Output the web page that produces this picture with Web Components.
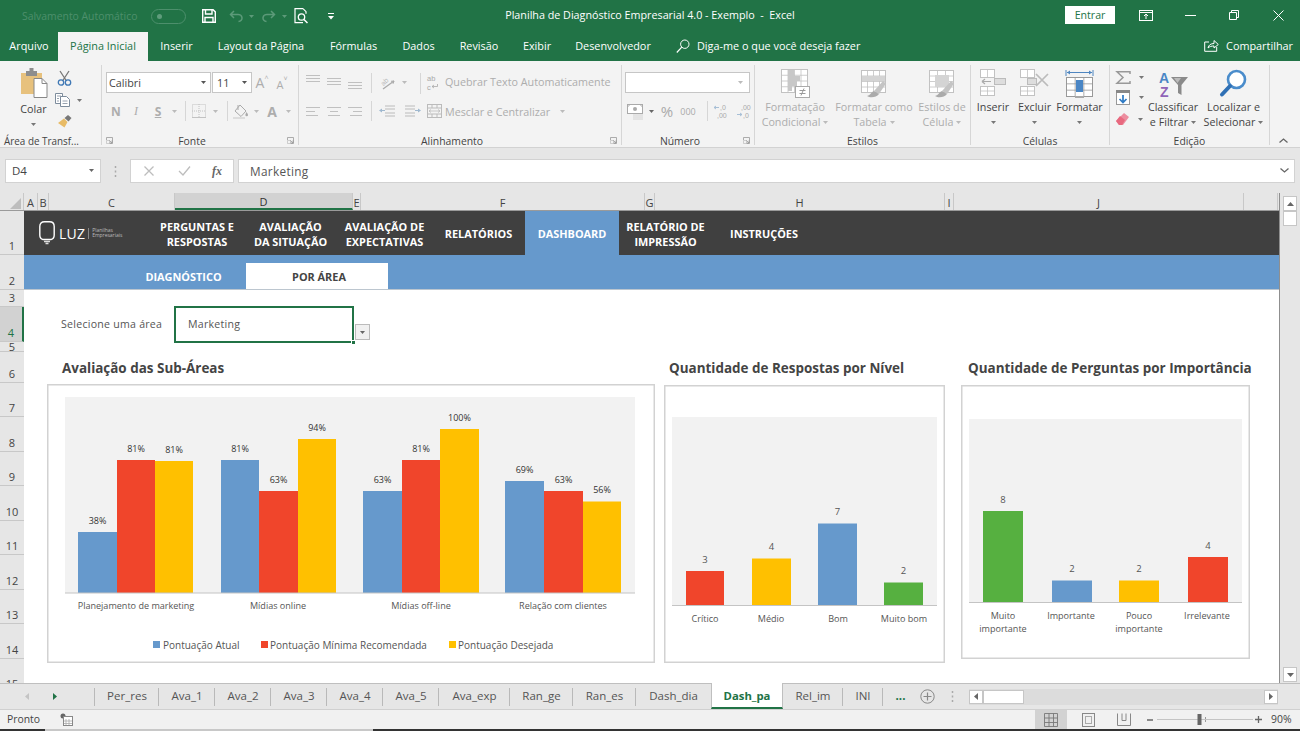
<!DOCTYPE html>
<html lang="pt-BR"><head><meta charset="utf-8"><title>Excel</title>
<style>
html,body{margin:0;padding:0;width:1300px;height:731px;overflow:hidden;background:#f3f3f3;font-family:"Open Sans","Liberation Sans",sans-serif}
#app{display:flex;flex-direction:column;width:1300px;height:731px}
</style></head><body>
<div id="app">
<x-titlebar></x-titlebar>
<x-tabstrip></x-tabstrip>
<x-ribbon></x-ribbon>
<x-formula></x-formula>
<x-grid></x-grid>
<x-sheettabs></x-sheettabs>
<x-status></x-status>
<x-strip></x-strip>
</div>
<script>
const svg=(w,h,b,st='')=>`<svg width="${w}" height="${h}" viewBox="0 0 ${w} ${h}" style="display:block;flex:none;overflow:visible;${st}">${b}</svg>`;
class B extends HTMLElement{
  connectedCallback(){ if(this.shadowRoot) return; this.attachShadow({mode:'open'}).innerHTML=`<style>${this.css()}</style>${this.html()}`; }
  css(){return ''} html(){return ''}
}
/* ---------- title bar ---------- */
customElements.define('x-titlebar',class extends B{
 css(){return `:host{display:grid;grid-template-columns:1fr auto 1fr;height:32px;background:#217346;color:#fff;flex:none;align-items:center;font-size:10.400px}
 .l,.r{display:flex;align-items:center}
 .l{padding-left:22px}.r{justify-content:flex-end}
 .auto{color:#4d8f6c;width:129px;font-size:10.400px;white-space:nowrap}
 .tog{width:35px;height:15px;border:1px solid #4d8f6c;border-radius:8px;box-sizing:border-box;display:flex;align-items:center;padding-left:5px}
 .tog i{width:5px;height:5px;border-radius:50%;background:#5f9c7c}
 .t{font-size:10.750px;white-space:pre;margin-top:-2px}
 .en{width:50px;height:18px;background:#fff;color:#217346;display:flex;align-items:center;justify-content:center;font-size:10.600px;margin-right:9px;margin-top:-2px}
 .c{display:flex;align-items:center;justify-content:center;width:44px;height:32px;flex:none;margin-top:-2px}`}
 html(){return `<div class="l"><span class="auto">Salvamento Automático</span><span class="tog"><i></i></span>
 ${svg(14,14,'<path d="M.7.7h10.400l2.200 2.200v10.400H.7z" fill="none" stroke="#fff" stroke-width="1.400"/><path d="M3.500 1v4h6.500V1M3 13V8.500h8V13" fill="none" stroke="#fff" stroke-width="1.400"/>','margin-left:16px')}
 ${svg(14,12,'<path d="M5 1 1.500 4.500 5 8M2 4.500h6.500a4 3.500 0 0 1 1 7" fill="none" stroke="#5c9a79" stroke-width="1.500"/>','margin-left:13px')}
 ${svg(5,3,'<path d="M0 0h5L2.500 3z" fill="#5c9a79"/>','margin-left:6px')}
 ${svg(14,12,'<path d="M9 1l3.500 3.500L9 8M12 4.500H5.500a4 3.500 0 0 0-1 7" fill="none" stroke="#5c9a79" stroke-width="1.500"/>','margin-left:8px')}
 ${svg(5,3,'<path d="M0 0h5L2.500 3z" fill="#5c9a79"/>','margin-left:6px')}
 ${svg(15,16,'<path d="M9 .7H1v14h8M9 .7l3 3v2" fill="none" stroke="#fff" stroke-width="1.200"/><circle cx="7.500" cy="9" r="3.200" fill="none" stroke="#fff" stroke-width="1.300"/><path d="M10 11.500l3.500 3.500" stroke="#fff" stroke-width="1.500"/>','margin-left:7px')}
 ${svg(6,7,'<path d="M0 .5h6" stroke="#fff"/><path d="M0 3h6L3 6.500z" fill="#fff"/>','margin-left:19px')}
 </div>
 <div class="t">Planilha de Diagnóstico Empresarial 4.0 - Exemplo  -  Excel</div>
 <div class="r"><span class="en">Entrar</span>
 <span class="c">${svg(14,11,'<rect x=".5" y=".5" width="13" height="10" fill="none" stroke="#fff"/><path d="M.5 2.500h13" stroke="#fff" stroke-width="1"/><path d="M7 9V4M5 6l2-2 2 2" fill="none" stroke="#fff"/>')}</span>
 <span class="c">${svg(11,1,'<path d="M0 .5h11" stroke="#fff"/>')}</span>
 <span class="c">${svg(10,10,'<path d="M.5 2.500h7v7h-7zM2.500 2.500v-2h7v7h-2" fill="none" stroke="#fff"/>')}</span>
 <span class="c">${svg(11,11,'<path d="M.5.5l10 10M10.500.5l-10 10" stroke="#fff"/>')}</span></div>`}
});
/* ---------- ribbon tabs ---------- */
customElements.define('x-tabstrip',class extends B{
 css(){return `:host{display:flex;height:29px;background:#217346;color:#fff;font-size:10.850px;flex:none}
 span{display:flex;align-items:center;justify-content:center;flex:none;white-space:nowrap;height:27px;padding-bottom:2px}
 .on{background:#f3f3f3;color:#217346}.sp{flex:1}`}
 html(){const t=[['Arquivo',58],['Página Inicial',90,1],['Inserir',57],['Layout da Página',112],['Fórmulas',73],['Dados',57],['Revisão',64],['Exibir',52],['Desenvolvedor',100]];
 return t.map(a=>`<span style="width:${a[1]}px" class="${a[2]?'on':''}">${a[0]}</span>`).join('')+
 `<span style="margin-left:13px;width:14px">${svg(14,14,'<circle cx="8.800" cy="5.200" r="4.200" fill="none" stroke="#fff"/><path d="M5.800 8.200.8 13.500" stroke="#fff" stroke-width="1.200"/>')}</span>
 <span style="margin-left:7px">Diga-me o que você deseja fazer</span><span class="sp"></span>
 <span>${svg(15,13,'<path d="M5 3H.7v9.300h12V8" fill="none" stroke="#fff"/><path d="M4 9c.5-3 3-4.500 6-4.500V1.500l4.300 4-4.300 3.500V7c-2.500 0-4.500.5-6 2z" fill="none" stroke="#fff"/>')}</span>
 <span style="margin-left:7px;margin-right:7px">Compartilhar</span>`}
});
/* ---------- ribbon ---------- */
customElements.define('rb-group',class extends B{
 css(){const w=this.getAttribute('w');return `:host{display:flex;flex-direction:column;flex:none;width:${w}px;height:80px;margin-top:4px;padding-top:7px;box-sizing:border-box;border-right:1px solid #d6d6d6}
 .b{flex:1;min-height:0}.f{height:15px;margin-bottom:-3px;display:grid;grid-template-columns:1fr auto 1fr;align-items:center;font-size:10.400px;color:#444;white-space:nowrap}
 .f.lnch{padding-right:16px}
 .k{justify-self:end;margin-right:-12px}`}
 html(){const L=this.getAttribute('launch')!==null;const s=this.getAttribute('label');const st=this.getAttribute('lstyle')||'';
 return `<div class="b"><slot></slot></div><div class="f ${L?'lnch':''}" style="${st}"><span></span><span>${s}</span>${L?`<span class="k">${svg(7,7,'<path d="M.5 3V.5h6v6H3.500M3 3l3 3M3.500 6H6V3.500" fill="none" stroke="#999" stroke-width=".8"/><path d="M.5 3.500h3v3h-3z" fill="none" stroke="#bbb" stroke-width=".7"/>')}</span>`:'<span></span>'}</div>`}
});
const dd=(c='#777')=>svg(5,3,`<path d="M0 0h5L2.500 3z" fill="${c}"/>`);
const g='#c2c2c2';
const grid=(x,y,w,h,cols,rows,c=g)=>{let s=`<rect x="${x+.5}" y="${y+.5}" width="${w}" height="${h}" fill="#fff" stroke="${c}"/>`;for(let i=1;i<cols;i++){const X=x+.5+i*w/cols;s+=`<path d="M${X} ${y}v${h+1}" stroke="${c}" stroke-width=".8"/>`}for(let i=1;i<rows;i++){const Y=y+.5+i*h/rows;s+=`<path d="M${x} ${Y}h${w+1}" stroke="${c}" stroke-width=".8"/>`}return s};
const brush=`<path d="M14 22l9-10 3 2.500-7 10.500z" fill="#c4c4c4"/><path d="M14 22c-3 1-3 4-7 5 3 2 9 2 12-2z" fill="#aaa"/>`;
const ico={
 paste:svg(28,30,'<path d="M1 5h21v21H1z" fill="#e7c17d"/><path d="M6 3h11v5H6z" fill="#8d8d8d"/><path d="M9.500 0h4v4h-4z" fill="#8d8d8d"/><path d="M14 10.500h8l5 5v14H14z" fill="#fff" stroke="#888"/><path d="M22 10.500v5h5" fill="none" stroke="#888"/>'),
 cut:svg(15,15,'<path d="M3 0l6.500 10M12 0 5.500 10" stroke="#777" stroke-width="1.300"/><circle cx="4" cy="11.500" r="2.700" fill="none" stroke="#3f78b5" stroke-width="1.300"/><circle cx="11" cy="11.500" r="2.700" fill="none" stroke="#3f78b5" stroke-width="1.300"/>'),
 copy:svg(15,14,'<path d="M.5.5h7v10h-7z" fill="#fff" stroke="#7d8c9c"/><path d="M5.500 3.500h6l3 3v7h-9z" fill="#fff" stroke="#7d8c9c"/><path d="M2 3h4M2 5.500h2M2 8h2M7.500 8h5M7.500 10.500h5" stroke="#7d8c9c" stroke-width=".8"/>'),
 brush:svg(15,14,'<path d="M7.500 4 11 1l3.500 3-3 3.500z" fill="#777"/><path d="M7 4.500l3.500 3.500-3 5.500L1 9z" fill="#e8bb66"/>'),
 borders:svg(14,14,`<rect x=".5" y=".5" width="13" height="13" fill="none" stroke="${g}" stroke-dasharray="1 1"/><path d="M7 0v14M0 7h14" stroke="${g}" stroke-dasharray="1 1"/><path d="M0 13.500h14" stroke="${g}"/>`),
 fill:svg(16,15,`<path d="M7 1l6 6-5 5.500L2 7z" fill="none" stroke="#aaa"/><path d="M5 1v5" stroke="#aaa"/><path d="M13.500 8c1 1.500 1.500 2.300 1.500 3a1.300 1.300 0 0 1-2.600 0c0-.7.500-1.500 1.100-3z" fill="#aaa"/><path d="M0 14h12" stroke="#ddd" stroke-width="2"/>`),
 al:(ys,x=[[0,14],[0,14],[0,14]])=>svg(14,15,ys.map((y,i)=>`<path d="M${x[i][0]} ${y+.5}h${x[i][1]}" stroke="#c0c0c0"/>`).join('')),
 orient:svg(15,14,'<path d="M3 13 14 5" stroke="#aaa" stroke-width="1.200"/><path d="M14 5l-3 .3M14 5l-1 2.800" stroke="#aaa"/><text x="1" y="8" font-size="7" fill="#bbb" font-family="Liberation Sans" transform="rotate(-45 5 6)">ab</text>'),
 indl:svg(16,12,'<path d="M6 1h10M6 4h10M6 8h10M6 11h10" stroke="#bbb"/><path d="M0 5.500l3-2v1.500h3v1H3v1.500z" fill="#9fb8cf"/>'),
 indr:svg(16,12,'<path d="M0 1h10M0 4h10M0 8h10M0 11h10" stroke="#bbb"/><path d="M16 5.500l-3-2v1.500h-3v1h3v1.500z" fill="#9fb8cf"/>'),
 wrap:svg(12,17,'<text x="0" y="7" font-size="7.500" fill="#aaa" font-family="Liberation Sans">ab</text><text x="0" y="15.700" font-size="7.500" fill="#aaa" font-family="Liberation Sans">c</text><path d="M5 12.500h5.500V10M5 12.500l2-1.500M5 12.500l2 1.500" fill="none" stroke="#aaa" stroke-width=".8"/>'),
 merge:svg(15,14,`<rect x=".5" y=".5" width="14" height="13" fill="none" stroke="#bbb"/><path d="M0 4h15M0 10h15M5 4V0M10 4V0M5 14v-4M10 14v-4" stroke="#bbb"/><path d="M2 7h11M2 7l2-1.500M2 7l2 1.500M13 7l-2-1.500M13 7l-2 1.500" fill="none" stroke="#bbb" stroke-width=".8"/>`),
 acc:svg(16,15,'<rect x=".5" y=".5" width="15" height="9" fill="#fff" stroke="#aaa"/><circle cx="8" cy="5" r="2" fill="#aaa"/><path d="M.5 3 3 .5M13 .5l2.500 2.500" stroke="#aaa"/><path d="M6 11h10M6 13h10M6 15h10" stroke="#ccc" stroke-width=".8"/>'),
 inc:svg(14,14,'<path d="M0 3.500h5M0 3.500l2-1.500M0 3.500l2 1.500" fill="none" stroke="#a7bfd6"/><text x="6" y="6" font-size="7" fill="#aaa" font-family="Liberation Sans">,0</text><text x="3" y="13.500" font-size="7" fill="#aaa" font-family="Liberation Sans">,00</text>'),
 dec:svg(14,14,'<path d="M0 10.500h5M5 10.500l-2-1.500M5 10.500l-2 1.500" fill="none" stroke="#a7bfd6"/><text x="4" y="6" font-size="7" fill="#aaa" font-family="Liberation Sans">,00</text><text x="6" y="13.500" font-size="7" fill="#aaa" font-family="Liberation Sans">,0</text>'),
 cond:svg(29,29,grid(0,0,26,23,4,4)+`<path d="M7 1h6v6H7zM7 7h12v5H7zM7 12h9v5H7zM7 17h4v5H7z" fill="#c8c8c8"/><rect x="14.500" y="17.500" width="14" height="11" fill="#fff" stroke="#aaa"/><path d="M18.500 21.500h6M18.500 24.500h6M23 19.500l-3 7" fill="none" stroke="#999"/>`),
 table:svg(28,29,grid(1,1,24,22,4,4)+`<path d="M2 7h23v5H2z" fill="#d4d4d4"/>`+brush),
 cell:svg(28,29,grid(1,1,24,22,3,4)+`<path d="M7 6h14v12H7z" fill="#d4d4d4"/>`+brush),
 ins:svg(26,27,grid(0,0,14,8,2,1)+grid(0,17,14,9,2,2)+`<rect x="14.500" y="9.500" width="11" height="6" fill="#ddd" stroke="#bbb"/><path d="M2 12.500h9M2 12.500l3-2.500M2 12.500l3 2.500" fill="none" stroke="#aaa" stroke-width="1.200"/>`),
 del:svg(29,27,grid(0,0,14,8,2,1)+grid(0,17,14,9,2,2)+`<rect x="7.500" y="9.500" width="9" height="6" fill="#ddd" stroke="#bbb"/><path d="M16 5l12 12M28 5 16 17" stroke="#bbb" stroke-width="1.700"/>`),
 fmt:svg(27,29,`<path d="M0 1v6M27 1v6M1 3.500h25" stroke="#4f86c0" fill="none"/><path d="M1 3.500l3-2v4zM26 3.500l-3-2v4z" fill="#4f86c0"/>`+grid(0,8,26,19,3,3,'#999')+`<rect x="10" y="11" width="7" height="12" fill="#4a86c5"/><path d="M9 27h9v2H9z" fill="#aaa"/>`),
 sigma:svg(15,13,'<path d="M14 3V.7H1l6 5.800L1 12.300h13V10" fill="none" stroke="#999" stroke-width="1.500"/>'),
 fillb:svg(14,15,'<rect x=".5" y=".5" width="13" height="14" fill="#fff" stroke="#999"/><path d="M0 0h14v3H0z" fill="#888"/><path d="M7 5v7M3.500 9 7 12.500 10.500 9" fill="none" stroke="#2f7bc4" stroke-width="1.700"/>'),
 eraser:svg(13,12,'<path d="M8 0l5 4-6 8H3L0 8z" fill="#ec8d9f"/><path d="M0 8l4-5 5 4-3 5H3z" fill="#e8697f"/>'),
 sort:svg(29,30,'<text x="0" y="14" font-size="14" font-weight="700" fill="#4a86c5" font-family="Liberation Sans">A</text><text x="1" y="28" font-size="14" font-weight="700" fill="#9064b8" font-family="Liberation Sans">Z</text><path d="M12 8h17l-6.500 8v10l-3.500-2v-8z" fill="#8a8a8a"/><path d="M15 9h7l-3.500 5z" fill="#bbb"/>'),
 find:svg(27,29,'<circle cx="16.500" cy="10.500" r="8.500" fill="#fff" stroke="#4a8ccb" stroke-width="2.600"/><path d="M10 17 2 25.500" stroke="#2f70b5" stroke-width="4" stroke-linecap="round"/>')
};
customElements.define('x-ribbon',class extends B{
 css(){return `:host{display:flex;height:87px;background:#f3f3f3;border-bottom:1px solid #d2d2d2;box-sizing:border-box;flex:none;color:#444;font-size:10.750px}
 .row{display:flex;align-items:center;height:21px;white-space:nowrap}
 .row.two{height:22px;margin-top:7px}
 .c{display:flex;align-items:center;justify-content:center;flex:none;height:100%}
 .sep{width:1px;background:#d6d6d6;height:20px;flex:none}
 .dis{color:#adadad}
 .combo{background:#fff;border:1px solid #c6c6c6;box-sizing:border-box;height:21px;display:flex;align-items:center;justify-content:space-between;padding:0 4px 0 2px;flex:none}
 .big{display:flex;flex-direction:column;align-items:center;flex:none;line-height:15px;text-align:center;white-space:nowrap;margin-top:-4px}
 .big .i{height:32px;display:flex;align-items:flex-start;justify-content:center;margin-top:1px}
 .big span.t{height:15px;display:flex;align-items:center;gap:3px}
 .flexr{display:flex}
 .col{display:flex;flex-direction:column;align-items:center;flex:none}`}
 html(){const c=(w,h,cl='',st='')=>`<span class="c ${cl}" style="width:${w}px;${st}">${h}</span>`;
 const big=(w,i,l1,l2,dis,dl2=true)=>`<div class="big ${dis?'dis':''}" style="width:${w}px"><span class="i">${i}</span><span class="t" style="margin-top:-1px">${l1}</span><span class="t">${l2}${dl2?dd(dis?'#bbb':'#777'):''}</span></div>`;
 return `
 <rb-group w="102" label="Área de Transf..." launch lstyle="grid-template-columns:4px auto 1fr;font-size:9.900px;padding-right:0">
  <div class="flexr">
   <div class="col" style="margin-left:10px;width:47px;margin-top:-4px"><span style="height:33px">${ico.paste}</span><span style="height:16px;line-height:16px;margin-top:0">Colar</span><span style="margin-top:6px">${dd()}</span></div>
   <div class="col" style="width:22px;align-items:flex-start;margin-top:-1px;gap:7px"><span>${ico.cut}</span><span class="flexr" style="align-items:center;gap:7px;margin-left:-2px;margin-top:0">${ico.copy}${dd()}</span><span>${ico.brush}</span></div>
  </div>
 </rb-group>
 <rb-group w="197" label="Fonte" launch>
  <div class="row" style="padding-left:4px"><span class="combo" style="width:105px">Calibri${dd('#555')}</span><span class="combo" style="width:40px;margin-left:1px;padding-left:4px">11${dd('#555')}</span>
   ${c(20,`<span class="dis" style="font-size:14px">A</span><span class="dis" style="font-size:7px;margin-top:-8px">^</span>`)}${c(20,`<span class="dis" style="font-size:11px;margin-top:3px">A</span><span class="dis" style="font-size:7px;margin-top:-8px">˅</span>`)}</div>
  <div class="row two" style="padding-left:4px">
   ${c(20,'<b style="font-size:12px">N</b>','dis')}${c(20,'<i style="font-size:12px;font-family:Liberation Serif">I</i>','dis')}${c(24,'<b style="font-size:12px;text-decoration:underline">S</b>','dis')}${c(8,dd('#bbb'))}
   ${c(14,'<span class="sep"></span>')}${c(14,ico.borders)}${c(18,dd('#bbb'))}${c(6,'<span class="sep"></span>')}
   ${c(22,ico.fill)}${c(8,dd('#bbb'))}${c(24,'<b style="font-size:14px">A</b>','dis')}${c(8,dd('#bbb'))}
  </div>
 </rb-group>
 <rb-group w="323" label="Alinhamento" launch>
  <div class="flexr">
  <div style="width:121px;flex:none;padding-left:4px;box-sizing:border-box">
   <div class="row">${c(20,ico.al([0,3,6]))}${c(21,ico.al([3,6,9]))}${c(22,ico.al([7,10,13]))}${c(5,'')}<span class="sep"></span>${c(30,ico.orient)}${dd('#bbb')}</div>
   <div class="row two">${c(20,ico.al([3,7,11],[[0,14],[0,9],[0,12]]))}${c(21,ico.al([3,7,11],[[0,14],[3,8],[1,12]]))}${c(22,ico.al([3,7,11],[[0,14],[5,9],[2,12]]))}${c(5,'')}<span class="sep"></span>${c(30,ico.indl)}${c(21,ico.indr)}</div>
  </div>
  <span class="sep" style="height:21px;margin-top:1px"></span>
  <div style="padding-left:6px">
   <div class="row dis" style="padding-bottom:1px;box-sizing:border-box">${ico.wrap}<span style="margin-left:6px">Quebrar Texto Automaticamente</span></div>
   <div class="row two dis">${ico.merge}<span style="margin-left:3px;padding-top:1px">Mesclar e Centralizar</span><span style="margin-left:10px">${dd('#bbb')}</span></div>
  </div>
  </div>
 </rb-group>
 <rb-group w="133" label="Número" launch>
  <div class="row" style="padding-left:3px"><span class="combo" style="width:125px;padding-right:6px"><span></span>${dd('#bbb')}</span></div>
  <div class="row two" style="padding-left:5px">${c(16,ico.acc)}${c(16,dd('#666'))}${c(16,'<span style="font-size:15px;color:#aaa">%</span>')}${c(26,'<span style="font-size:9px;color:#aaa">000</span>')}${c(2,'')}<span class="sep" style="margin-left:4px"></span>${c(26,ico.inc)}${c(20,ico.dec)}</div>
 </rb-group>
 <rb-group w="216" label="Estilos"><div class="flexr">${big(80,ico.cond,'Formatação','Condicional',1)}${big(78,ico.table,'Formatar como','Tabela',1)}${big(58,ico.cell,'Estilos de','Célula',1)}</div></rb-group>
 <rb-group w="139" label="Células"><div class="flexr">${big(44,ico.ins,'Inserir',dd(),0,false)}${big(39,ico.del,'Excluir',dd(),0,false)}${big(51,ico.fmt,'Formatar',dd(),0,false)}</div></rb-group>
 <rb-group w="160" label="Edição"><div class="flexr">
   <div class="col" style="width:38px;align-items:flex-start;padding-left:6px;box-sizing:border-box;margin-top:-1px;gap:6px">
    <span class="flexr" style="align-items:center;gap:8px">${ico.sigma}${dd()}</span><span class="flexr" style="align-items:center;gap:9px">${ico.fillb}${dd()}</span><span class="flexr" style="align-items:center;gap:9px;margin-top:2px">${ico.eraser}${dd()}</span></div>
   ${big(50,ico.sort,'Classificar','e Filtrar')}<span style="width:5px"></span>${big(61,ico.find,'Localizar e','Selecionar')}</div></rb-group>
 <div style="flex:1;display:flex;align-items:flex-end;justify-content:center;padding-bottom:4px;padding-right:4px">${svg(9,5,'<path d="M.5 4.500 4.500 1l4 3.500" fill="none" stroke="#666" stroke-width="1.300"/>')}</div>`}
});
/* ---------- formula bar ---------- */
customElements.define('x-formula',class extends B{
 css(){return `:host{display:flex;height:45px;background:#e6e6e6;padding:11px 5px 10px;box-sizing:border-box;flex:none;color:#444;font-size:11.500px}
 .b{background:#fff;border:1px solid #d2d2d2;box-sizing:border-box;height:24px;display:flex;align-items:center;flex:none}
 .c{display:flex;align-items:center;justify-content:center;flex:none}`}
 html(){return `<span class="b" style="width:96px;padding:0 6px 1px;justify-content:space-between;">D4${dd('#666')}</span>
 <span class="c" style="width:29px">${svg(3,11,'<path d="M1.500 0v2M1.500 4.500v2M1.500 9v2" stroke="#aaa" stroke-width="1.500"/>')}</span>
 <span class="b" style="width:104px"><span class="c" style="width:36px">${svg(10,10,'<path d="M.5.5l9 9M9.500.5l-9 9" stroke="#bdbdbd" stroke-width="1.300"/>')}</span><span class="c" style="width:34px">${svg(13,10,'<path d="M1 5l4 4 7-8.500" fill="none" stroke="#bdbdbd" stroke-width="1.300"/>')}</span><span class="c" style="width:32px;font:italic 700 12px 'Liberation Serif',serif;color:#666">fx</span></span>
 <span class="b" style="flex:1;margin-left:4px;padding:0 5px 1px 11px;justify-content:space-between;letter-spacing:.32px;color:#555;font-size:11.800px"><span>Marketing</span>${svg(9,5,'<path d="M.5.5l4 3.500 4-3.500" fill="none" stroke="#666" stroke-width="1.300"/>')}</span>`}
});
/* ---------- chart ---------- */
const COL={b:'#6699cc',r:'#f0452b',y:'#ffc000',gr:'#56b040'};
const CH={
 c1:{box:[47,384,608,279],plot:[65,397,570,196],base:593,fs:9,lc:'#333',
  bars:[[78,117,532,'b','38%'],[117,155,460,'r','81%'],[155,193,461,'y','81%'],[221,259,460,'b','81%'],[259,298,491,'r','63%'],[298,336,439,'y','94%'],[363,402,491,'b','63%'],[402,440,460,'r','81%'],[440,479,429,'y','100%'],[505,544,481,'b','69%'],[544,583,491,'r','63%'],[583,621,501.500,'y','56%']],
  cats:[[136,['Planejamento de marketing']],[278,['Mídias online']],[421,['Mídias off-line']],[563,['Relação com clientes']]],caty:606},
 c2:{box:[664,385,281,278],plot:[672,417,265,189],base:605.500,fs:9.500,lc:'#555',
  bars:[[686,724,571,'r','3'],[752,791,558.500,'y','4'],[818,857,523.500,'b','7'],[884,923,582.500,'gr','2']],
  cats:[[705,['Crítico']],[771,['Médio']],[838,['Bom']],[904,['Muito bom']]],caty:619},
 c3:{box:[961,385,289,274],plot:[969,419,273,184],base:602.500,fs:9.500,lc:'#555',
  bars:[[983,1023,511,'gr','8'],[1052,1092,580.500,'b','2'],[1119,1159,580.500,'y','2'],[1188,1228,557,'r','4']],
  cats:[[1003,['Muito','importante']],[1071,['Importante']],[1139,['Pouco','importante']],[1207,['Irrelevante']]],caty:616}
};
customElements.define('x-chart',class extends B{
 css(){const d=CH[this.getAttribute('data')];return `:host{display:block;width:${d.box[2]}px;height:${d.box[3]}px;flex:none}svg{display:block}text{font-family:"Open Sans","Liberation Sans",sans-serif}`}
 html(){const d=CH[this.getAttribute('data')],[x,y,w,h]=d.box,[px,py,pw,ph]=d.plot;
 let s=`<svg width="${w}" height="${h}" viewBox="${x} ${y} ${w} ${h}"><rect x="${x+.75}" y="${y+.75}" width="${w-1.5}" height="${h-1.5}" fill="#fff" stroke="#d2d2d2" stroke-width="1.500"/><rect x="${px}" y="${py}" width="${pw}" height="${ph}" fill="#f2f2f2"/>`;
 for(const [a,b,t,c,l] of d.bars){s+=`<rect x="${a}" y="${t}" width="${b-a}" height="${d.base-t}" fill="${COL[c]}"/><text x="${(a+b)/2}" y="${t-8.500}" text-anchor="middle" font-size="${d.fs}" fill="${d.lc}">${l}</text>`}
 s+=`<path d="M${px} ${d.base}h${pw}" stroke="#c4c4c4"/>`;
 for(const [cx,ls] of d.cats){ls.forEach((t,i)=>{s+=`<text x="${cx}" y="${d.caty+3+i*12.500}" text-anchor="middle" font-size="9.050" fill="#555">${t}</text>`})}
 if(d===CH.c1){[[153,'b','Pontuação Atual',163],[261,'r','Pontuação Mínima Recomendada',270],[449,'y','Pontuação Desejada',458]].forEach(([a,c,t,tx])=>{s+=`<rect x="${a}" y="641" width="7" height="7" fill="${COL[c]}"/><text x="${tx}" y="648.500" font-size="10" fill="#555">${t}</text>`})}
 return s+'</svg>'}
});
customElements.define('x-chartcol',class extends B{
 css(){return `:host{display:flex;flex-direction:column;flex:none}
 .t{height:${this.getAttribute('th')||33}px;font-size:13.450px;font-weight:700;color:#444;white-space:nowrap;padding-left:${this.getAttribute('ti')}px;padding-top:5px;box-sizing:border-box;line-height:22px}`}
 html(){return `<div class="t">${this.getAttribute('title')}</div><slot></slot>`}
});
/* ---------- sheet ---------- */
customElements.define('x-navbar',class extends B{
 css(){return `:host{display:flex;height:44px;background:#404040;color:#fff;flex:none;font-size:10.900px;font-weight:700;line-height:15px}
 .i{display:flex;align-items:center;justify-content:center;text-align:center;flex:none;padding-top:1px;box-sizing:border-box}
 .on{background:#6699cc}
 .logo{width:126px;display:flex;align-items:center;padding-left:15px;box-sizing:border-box;flex:none;gap:4px;font-weight:400}
 .luz{font-size:14px;letter-spacing:.2px;}.sm{font-size:5px;line-height:5.500px;color:#bbb;border-left:1px solid #888;padding-left:3px;margin-left:-1px}`}
 html(){const t=[['PERGUNTAS E<br>RESPOSTAS',94],['AVALIAÇÃO<br>DA SITUAÇÃO',93],['AVALIAÇÃO DE<br>EXPECTATIVAS',95],['RELATÓRIOS',93],['DASHBOARD',94,1],['RELATÓRIO DE<br>IMPRESSÃO',93],['INSTRUÇÕES',104]];
 return `<div class="logo">${svg(16,24,'<path d="M4 18.500C1.500 18 .8 16.500.8 14V5.500C.8 2.500 2.500.8 5.500.8h5c3 0 4.700 1.700 4.700 4.700V14c0 2.500-.7 4-3.200 4.500z" fill="none" stroke="#fff" stroke-width="1.400"/><path d="M5 20.500h6M6.500 22.500h3" stroke="#ddd" stroke-width="1.300"/>')}<span class="luz">LUZ</span><span class="sm">Planilhas<br>Empresariais</span></div>`+
 t.map(a=>`<div class="i ${a[2]?'on':''}" style="width:${a[1]}px">${a[0]}</div>`).join('')}
});
customElements.define('x-subtabs',class extends B{
 css(){return `:host{display:flex;height:35px;background:#6699cc;border-bottom:1px solid #bcc6cf;box-sizing:border-box;flex:none;align-items:flex-end;font-size:10.900px;font-weight:700;padding-left:97px}
 span{display:flex;align-items:center;justify-content:center;height:26px;flex:none;box-sizing:border-box}`}
 html(){return `<span style="width:125px;color:#fff;">DIAGNÓSTICO</span><span style="width:142px;background:#fff;color:#444;padding-left:4px">POR ÁREA</span>`}
});
customElements.define('x-areaselect',class extends B{
 css(){return `:host{display:flex;align-items:center;height:37px;margin-top:16px;padding-left:37px;flex:none;font-size:10.600px;color:#555;letter-spacing:.25px}
 .l{width:113px;flex:none;padding-bottom:2px;}.box{width:180px;height:37px;border:2px solid #217346;box-sizing:border-box;display:flex;align-items:center;padding:0 0 2px 12px;flex:none;margin-right:0}
 .h{flex:none;width:5px;height:5px;background:#217346;border:1px solid #fff;box-sizing:border-box;margin-left:-3px;margin-top:36px;margin-right:-1px}
 .d{width:15px;height:16px;background:#f0f0f0;border:1px solid #bbb;box-sizing:border-box;display:flex;align-items:center;justify-content:center;margin-top:15px;flex:none}`}
 html(){return `<span class="l">Selecione uma área</span><span class="box">Marketing</span><span class="h"></span><span class="d">${dd('#666')}</span>`}
});
customElements.define('x-sheet',class extends B{
 css(){return `:host{display:flex;flex-direction:column;flex:1;background:#fff;min-width:0;overflow:hidden}
 .charts{display:flex;padding-left:23px;margin-top:9px}`}
 html(){return `<x-navbar></x-navbar><x-subtabs></x-subtabs><x-areaselect></x-areaselect>
 <div class="charts">
  <x-chartcol title="Avaliação das Sub-Áreas" ti="15" th="32"><x-chart data="c1"></x-chart></x-chartcol>
  <x-chartcol title="Quantidade de Respostas por Nível" ti="5" th="33" style="margin-left:9px"><x-chart data="c2"></x-chart></x-chartcol>
  <x-chartcol title="Quantidade de Perguntas por Importância" ti="7" th="33" style="margin-left:16px"><x-chart data="c3"></x-chart></x-chartcol>
 </div>`}
});
customElements.define('x-grid',class extends B{
 css(){return `:host{display:flex;height:490px;flex:none;background:#e6e6e6;overflow:hidden;color:#444;font-size:11px}
 .main{width:1280px;display:flex;flex-direction:column;flex:none;border-right:1px solid #8f8f8f;box-sizing:border-box}
 .hd{display:flex;height:18px;flex:none;border-bottom:1px solid #9a9a9a;box-sizing:border-box;background:#e6e6e6}
 .hd span{display:flex;align-items:center;justify-content:center;flex:none;border-right:1px solid #c8c8c8;box-sizing:border-box;overflow:hidden;font-size:11px;height:17px;padding-top:1px}
 .hd .on{background:#d2d2d2;border-bottom:2px solid #217346;color:#333;padding-top:2px}
 .body{display:flex;flex:1;min-height:0}
 .rows{width:24px;flex:none;display:flex;flex-direction:column;overflow:hidden;background:#e6e6e6}
 .rows span{display:flex;align-items:flex-end;justify-content:center;flex:none;border-bottom:1px solid #c8c8c8;box-sizing:border-box;line-height:14px;padding-bottom:1px;font-size:11px;overflow:hidden}
 .rows .on{background:#d2d2d2;border-right:2px solid #217346;color:#217346}
 .sb{flex:1;display:flex;flex-direction:column;align-items:center;padding-top:3px;padding-bottom:1px;box-sizing:border-box}
 .btn{width:14px;height:15px;background:#fff;border:1px solid #c6c6c6;box-sizing:border-box;display:flex;align-items:center;justify-content:center;flex:none}`}
 html(){const cols=[['',24,'c'],['A',14],['B',11],['C',126],['D',178,'on'],['E',8],['F',284],['G',10],['H',290],['I',9],['J',290],['K',34]];
 const rows=[44,35,17,35,10,31,34,35,34,35,34,35,34,35,34];
 return `<div class="main"><div class="hd">${cols.map(c=>`<span style="width:${c[1]}px" class="${c[2]||''}">${c[2]==='c'?svg(11,11,'<path d="M11 0v11H0z" fill="#bdbdbd"/>','margin:3px 0 0 8px'):(c[0]==='K'?'':c[0])}</span>`).join('')}</div>
 <div class="body"><div class="rows">${rows.map((h,i)=>`<span style="height:${h}px;${i===4?'line-height:9px;padding-bottom:0':''}" class="${i===3?'on':''}">${i+1}</span>`).join('')}</div><x-sheet></x-sheet></div></div>
 <div class="sb"><span class="btn">${svg(7,4,'<path d="M0 4h7L3.500 0z" fill="#666"/>')}</span><span class="btn" style="margin-top:0"></span><span style="flex:1"></span><span class="btn">${svg(7,4,'<path d="M0 0h7L3.500 4z" fill="#666"/>')}</span></div>`}
});
/* ---------- sheet tabs ---------- */
customElements.define('x-sheettabs',class extends B{
 css(){return `:host{display:flex;height:26px;flex:none;background:#e6e6e6;border-top:1px solid #bfbfbf;box-sizing:border-box;color:#555;font-size:11.500px;align-items:stretch}
 .c{display:flex;align-items:center;justify-content:center;flex:none}
 .t{display:flex;align-items:center;justify-content:center;flex:none;box-sizing:border-box;padding-bottom:2px;background:linear-gradient(#b9b9b9,#b9b9b9) right center/1px 18px no-repeat}
 .t.on{background:#fff;color:#217346;font-weight:700;font-size:11.300px;border-bottom:2px solid #217346;border-left:1px solid #bfbfbf;border-right:1px solid #bfbfbf;margin-top:-1px;height:26px;padding-bottom:0}
 .trk{display:flex;flex:none;width:309px;align-items:center}
 .track{display:flex;align-items:center;background:#dcdcdc;height:16px;width:100%}
 .sb{width:14px;height:14px;background:#fff;border:1px solid #c6c6c6;box-sizing:border-box;display:flex;align-items:center;justify-content:center;flex:none}`}
 html(){const t=[['Per_res',64],['Ava_1',56],['Ava_2',56],['Ava_3',56],['Ava_4',56],['Ava_5',56],['Ava_exp',71],['Ran_ge',63],['Ran_es',63],['Dash_dia',75,1],['Dash_pa',72,2],['Rel_im',60],['INI',40]];
 return `<span class="c" style="width:40px;justify-content:flex-end;padding-right:0">${svg(4,7,'<path d="M4 0v7L0 3.500z" fill="#c4c4c4"/>','margin-right:11px')}</span><span class="c" style="width:20px;">${svg(4,7,'<path d="M0 0v7l4-3.500z" fill="#217346"/>','margin-left:10px')}</span><span class="c" style="width:35px;background:linear-gradient(#b9b9b9,#b9b9b9) right center/1px 18px no-repeat"></span>
 ${t.map(a=>`<span class="t ${a[2]===2?'on':''}" style="width:${a[1]}px;${a[2]===1?'background:none':''}">${a[0]}</span>`).join('')}
 <span class="c" style="width:35px;color:#217346;font-weight:700;padding-bottom:3px">...</span>
 <span class="c" style="width:18px">${svg(15,15,'<circle cx="7.500" cy="7.500" r="6.700" fill="none" stroke="#888"/><path d="M7.500 3.500v8M3.500 7.500h8" stroke="#888" stroke-width="1.200"/>')}</span>
 <span class="c" style="width:33px">${svg(3,11,'<path d="M1.500 0v2M1.500 4.500v2M1.500 9v2" stroke="#aaa" stroke-width="1.500"/>')}</span>
 <span class="trk"><span class="track"><span class="sb">${svg(4,7,'<path d="M4 0v7L0 3.500z" fill="#666"/>')}</span><span class="sb" style="width:41px"></span><span style="flex:1"></span><span class="sb">${svg(4,7,'<path d="M0 0v7l4-3.500z" fill="#666"/>')}</span></span></span>`}
});
/* ---------- status ---------- */
customElements.define('x-status',class extends B{
 css(){return `:host{display:flex;height:20px;flex:none;background:#f1f1f1;border-top:1px solid #d0d0d0;box-sizing:border-box;color:#444;font-size:10.400px;align-items:center;padding-left:7px}
 .c{display:flex;align-items:center;justify-content:center;flex:none;height:19px}
 .tx{padding-bottom:2px;flex:none}`}
 html(){return `<span class="tx" style="width:53px">Pronto</span>${svg(13,13,'<circle cx="3" cy="3" r="2.500" fill="#666"/><rect x="3.500" y="3.500" width="9" height="9" fill="#fff" stroke="#888"/><path d="M6 6v6M9 6v6M4 8h8M4 10.500h8" stroke="#aaa" stroke-width=".8"/>')}
 <span style="flex:1"></span>
 <span class="c" style="width:32px;background:#d2d2d2">${svg(14,14,'<path d="M.5.5h13v13H.5zM5 .5v13M9.500.5v13M.5 5h13M.5 9.500h13" fill="none" stroke="#777" stroke-width=".9"/>')}</span>
 <span class="c" style="width:42px">${svg(13,14,'<rect x=".5" y=".5" width="12" height="13" fill="none" stroke="#888"/><rect x="3.500" y="3.500" width="6" height="7" fill="none" stroke="#aaa"/>')}</span>
 <span class="c" style="width:30px">${svg(14,13,'<path d="M.5.5v12h13V.5M5 .5v7h4V.5" fill="none" stroke="#888"/>')}</span>
 <span class="c" style="width:18px;padding-left:4px;box-sizing:border-box">${svg(6,2,'<path d="M0 1h6" stroke="#666" stroke-width="1.500"/>')}</span>
 <span class="c" style="width:96px;background:linear-gradient(#c4c4c4,#c4c4c4) center/100% 1px no-repeat,linear-gradient(#999,#999) center/1px 5px no-repeat">${svg(5,11,'<rect width="4" height="11" x=".5" fill="#666"/>','margin-left:-12px')}</span>
 <span class="c" style="width:11px">${svg(7,7,'<path d="M3.500 0v7M0 3.500h7" stroke="#666" stroke-width="1.300"/>')}</span>
 <span class="tx" style="width:22px;margin-left:7px;margin-right:7px;white-space:nowrap">90%</span>`}
});
customElements.define('x-strip',class extends B{
 css(){return `:host{display:block;height:2px;flex:none;background:linear-gradient(90deg,#333 0,#333 45px,#c8c8c8 45px,#c8c8c8 373px,#333 373px)}`}
});
</script>
</body></html>
